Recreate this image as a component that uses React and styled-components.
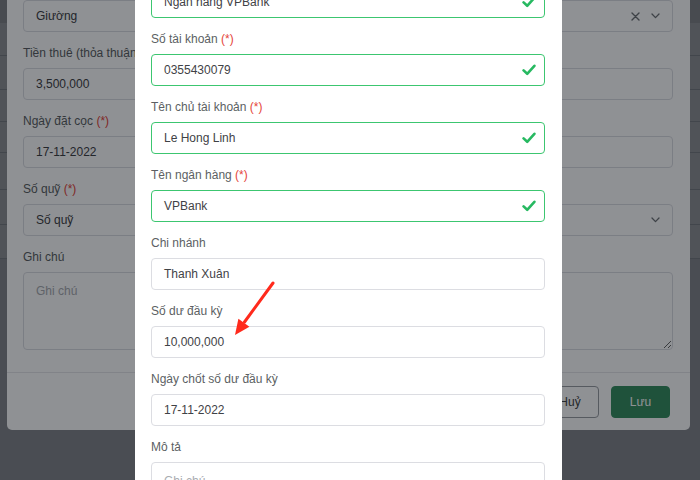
import React from "react";
import styled, { createGlobalStyle } from "styled-components";

const GlobalStyle = createGlobalStyle`
  html, body {
    margin: 0;
    padding: 0;
    overflow: hidden;
    background: #ffffff;
    font-family: "Liberation Sans", Arial, sans-serif;
  }
  * { box-sizing: border-box; }
`;

// page behind both modals
const Page = styled.div`
  width: 700px;
  height: 480px;
  background: #eceef1;
`;

const PageTable = styled.div`
  background: #ffffff;
`;

const PageHead = styled.div`
  height: 23px;
  background: #e4e6e8;
`;

const PageRow = styled.div`
  height: ${(p) => p.h}px;
  border-bottom: 1px solid #d3d6da;
`;

const Backdrop = styled.div`
  position: fixed;
  inset: 0;
  background: rgba(0, 5, 12, 0.44);
`;

const BackModal = styled.div`
  position: fixed;
  left: 7px;
  bottom: 50px;
  width: 683px;
  background: #ffffff;
  border-radius: 0 0 5px 5px;
`;

const ModalBody = styled.div`
  padding: 0 17px 10px 16px;
`;

// top of the modal is scrolled out of view
const FrontModal = styled.div`
  position: fixed;
  left: 135px;
  top: -30px;
  width: 427px;
  height: 540px;
  background: #ffffff;
  padding: 16px 17px 16px 16px;
`;

const Field = styled.div`
  display: flex;
  flex-direction: column;
  gap: 6px;
  margin-bottom: 12px;
`;

const Label = styled.label`
  font-size: 12px;
  line-height: 18px;
  color: #5c5f63;
  white-space: nowrap;
`;

const Req = styled.span`
  color: #e5453a;
`;

const InputBox = styled.div`
  position: relative;
  height: 32px;
  border: 1px solid ${(p) => (p.valid ? "#3cc670" : "#dcdde2")};
  border-radius: 4px;
  background: #ffffff;
  display: flex;
  align-items: center;
  padding: 0 8px 0 12px;
  font-size: 12px;
  line-height: 18px;
  color: #3f4246;
`;

const Value = styled.span`
  flex: 1;
  color: #3f4246;
`;

const Area = styled.textarea`
  display: block;
  width: 100%;
  height: 78px;
  border: 1px solid #dcdde2;
  border-radius: 4px;
  padding: 9px 12px;
  font-family: "Liberation Sans", Arial, sans-serif;
  font-size: 12px;
  line-height: 18px;
  color: #3f4246;
  resize: vertical;
  outline: none;
  &::placeholder { color: #a9acb1; }
`;

const Icons = styled.span`
  display: flex;
  align-items: center;
  gap: 11px;
  margin-right: 4px;
  color: #6f7377;
`;

const Footer = styled.div`
  border-top: 1px solid #e6e7ea;
  padding: 13px 20px 12px;
  display: flex;
  justify-content: flex-end;
  gap: 12px;
`;

const Button = styled.button`
  height: 32px;
  width: ${(p) => p.w}px;
  border-radius: 4px;
  font-family: "Liberation Sans", Arial, sans-serif;
  font-size: 12px;
  border: 1px solid ${(p) => (p.primary ? "#388f61" : "#9a9da2")};
  background: ${(p) => (p.primary ? "#388f61" : "#ffffff")};
  color: ${(p) => (p.primary ? "#ffffff" : "#444")};
`;

const Arrow = styled.svg`
  position: fixed;
  left: 225px;
  top: 276px;
`;

const Check = () => (
  <svg width="14" height="12" viewBox="0 0 14 12">
    <path d="M1.6 6.4 L5.2 9.8 L12.4 1.8" fill="none" stroke="#27b961" strokeWidth="2.6" strokeLinecap="round" strokeLinejoin="round" />
  </svg>
);

const Chevron = () => (
  <svg width="9" height="6" viewBox="0 0 9 6">
    <path d="M1 1 L4.5 4.6 L8 1" fill="none" stroke="currentColor" strokeWidth="1.3" strokeLinecap="round" strokeLinejoin="round" />
  </svg>
);

const Cross = () => (
  <svg width="9" height="9" viewBox="0 0 9 9">
    <path d="M1 1 L8 8 M8 1 L1 8" fill="none" stroke="currentColor" strokeWidth="1.4" strokeLinecap="round" />
  </svg>
);

function FieldLabel({ label, required }) {
  return (
    <Label>
      {label} {required && <Req>(*)</Req>}
    </Label>
  );
}

function TextField({ label, required, value, valid }) {
  return (
    <Field>
      {label && <FieldLabel label={label} required={required} />}
      <InputBox valid={valid}>
        <Value>{value}</Value>
        {valid && <Check />}
      </InputBox>
    </Field>
  );
}

function SelectField({ label, required, value, clearable }) {
  return (
    <Field>
      {label && <FieldLabel label={label} required={required} />}
      <InputBox>
        <Value>{value}</Value>
        <Icons>
          {clearable && <Cross />}
          <Chevron />
        </Icons>
      </InputBox>
    </Field>
  );
}

function AreaField({ label, placeholder }) {
  return (
    <Field>
      <Label>{label}</Label>
      <Area placeholder={placeholder} />
    </Field>
  );
}

export default function App() {
  const rows = [33, 34, 32, 31, 37, 35, 34];
  return (
    <>
      <GlobalStyle />
      <Page>
        <PageTable>
          <PageHead />
          {rows.map((h, i) => (
            <PageRow key={i} h={h} />
          ))}
        </PageTable>
      </Page>
      <Backdrop />
      <BackModal>
        <ModalBody>
          <SelectField value="Giường" clearable />
          <TextField label="Tiền thuê (thỏa thuận)" value="3,500,000" />
          <TextField label="Ngày đặt cọc" required value="17-11-2022" />
          <SelectField label="Số quỹ" required value="Số quỹ" />
          <AreaField label="Ghi chú" placeholder="Ghi chú" />
        </ModalBody>
        <Footer>
          <Button w={58}>Huỷ</Button>
          <Button w={59} primary>
            Lưu
          </Button>
        </Footer>
      </BackModal>
      <Backdrop />
      <FrontModal>
        <TextField value="Ngân hàng VPBank" valid />
        <TextField label="Số tài khoản" required value="0355430079" valid />
        <TextField label="Tên chủ tài khoản" required value="Le Hong Linh" valid />
        <TextField label="Tên ngân hàng" required value="VPBank" valid />
        <TextField label="Chi nhánh" value="Thanh Xuân" />
        <TextField label="Số dư đầu kỳ" value="10,000,000" />
        <TextField label="Ngày chốt số dư đầu kỳ" value="17-11-2022" />
        <AreaField label="Mô tả" placeholder="Ghi chú" />
      </FrontModal>
      <Arrow width="56" height="64" viewBox="225 276 56 64">
        <line x1="273" y1="283" x2="244.5" y2="322" stroke="#ff2a1c" strokeWidth="3" strokeLinecap="round" />
        <polygon points="235,335 238.4,318.8 249.4,326.8" fill="#ff2a1c" />
      </Arrow>
    </>
  );
}
